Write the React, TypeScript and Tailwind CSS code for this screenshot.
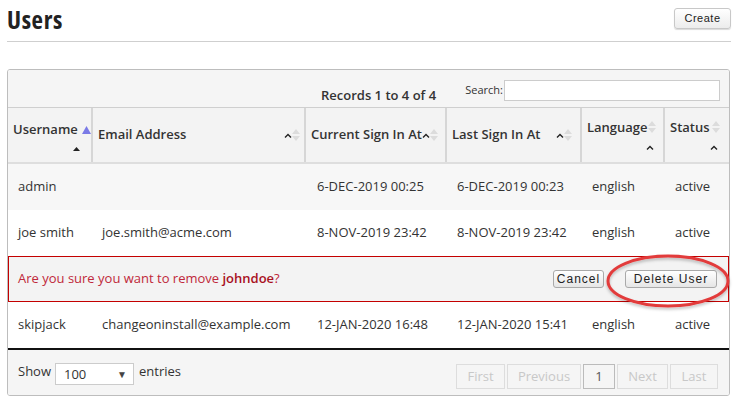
const SortBoth = () => (
  <svg width="8" height="14" viewBox="0 0 8 14" className="shrink-0">
    <polygon points="4,1 8,6 0,6" fill="#dcdcdc" />
    <polygon points="0,8 8,8 4,13" fill="#dcdcdc" />
  </svg>
);

const Caret = () => (
  <svg width="8" height="5" viewBox="0 0 8 5" className="shrink-0">
    <polyline points="1,4.5 4,1.5 7,4.5" fill="none" stroke="#222" strokeWidth="1.4" />
  </svg>
);

const cols = ["w-[85px]", "w-[213px]", "w-[141px]", "w-[135px]", "w-[83px]", "w-[64px]"];

const rows = [
  { user: "admin", email: "", cur: "6-DEC-2019 00:25", last: "6-DEC-2019 00:23", bg: "bg-[#f7f7f7]" },
  { user: "joe smith", email: "joe.smith@acme.com", cur: "8-NOV-2019 23:42", last: "8-NOV-2019 23:42", bg: "bg-white" },
];

const Row = ({ r }: { r: { user: string; email: string; cur: string; last: string; bg: string } }) => (
  <div className={`flex h-[46px] items-center text-[13px] text-[#333] whitespace-nowrap ${r.bg}`}>
    <div className={`${cols[0]} pl-[10px]`}>{r.user}</div>
    <div className={`${cols[1]} pl-[9px]`}>{r.email}</div>
    <div className={`${cols[2]} pl-[11px]`}>{r.cur}</div>
    <div className={`${cols[3]} pl-[10px]`}>{r.last}</div>
    <div className={`${cols[4]} pl-[10px]`}>english</div>
    <div className={`${cols[5]} pl-[10px]`}>active</div>
  </div>
);

const btn =
  "h-[18px] rounded-[3px] border border-[#a9a9a9] bg-gradient-to-b from-white to-[#e6e6e6] text-[12px] tracking-[1px] text-[#222] font-['Liberation_Sans',Arial,sans-serif] leading-none";

const pageBtn = "h-[25px] border border-[#ddd] bg-[#f5f5f5] text-[13px] text-[#c8c8c8] flex items-center justify-center";

export default function App() {
  return (
    <div className="w-[747px] h-[405px] bg-white px-[7px] font-['Open_Sans',sans-serif] text-[#333] relative overflow-hidden">
      <div className="flex items-center justify-between h-[42px] border-b border-[#cfcfcf] w-[724px]">
        <h1 className="text-[25px] font-bold font-stretch-[85%] tracking-[0.6px] text-[#222] leading-none mb-[2px]">Users</h1>
        <button className="h-[21px] w-[57px] mb-[4px] rounded-[3px] border border-[#c8c8c8] bg-gradient-to-b from-white to-[#ececec] text-[11px] tracking-[0.5px] text-[#222] font-['Liberation_Sans',Arial,sans-serif] shadow-[0_1px_1px_rgba(0,0,0,0.15)]">
          Create
        </button>
      </div>

      <div className="mt-[27px] w-[723px] rounded-[3px] border border-[#bdbdbd] overflow-hidden">
        <div className="flex items-center h-[38px] bg-[#f5f5f5] border-b border-[#cfcfcf]">
          <span className="ml-[313px] mt-[14px] text-[13px] font-semibold text-[#333]">Records 1 to 4 of 4</span>
          <label className="ml-auto flex items-center text-[11px] text-[#333] mr-[9px] mt-[4px]">
            Search:
            <input className="ml-[1px] w-[216px] h-[21px] bg-white border border-[#ccc] outline-none" />
          </label>
        </div>

        <div className="flex h-[56px] bg-[#f3f3f3] border-b-2 border-[#dedede] text-[13px] font-semibold text-[#333] whitespace-nowrap">
          <div className={`${cols[0]} border-r-2 border-[#d6d6d6] flex flex-col justify-center pl-[5px] pr-[10px]`}>
            <div className="flex items-center gap-[4px] mt-[1px]">
              <span>Username</span>
              <svg width="9" height="8" viewBox="0 0 9 8" className="shrink-0"><polygon points="4.5,0 9,8 0,8" fill="#7a7ae6" /></svg>
            </div>
            <div className="flex justify-end pr-[1px] mt-[7px]">
              <svg width="7" height="4" viewBox="0 0 7 4"><polygon points="3.5,0 7,4 0,4" fill="#222" /></svg>
            </div>
          </div>
          <div className={`${cols[1]} border-r-2 border-[#d6d6d6] flex items-center pl-[5px] pr-[4px]`}>
            <span>Email Address</span>
            <span className="ml-auto flex items-center"><Caret /><SortBoth /></span>
          </div>
          <div className={`${cols[2]} border-r-2 border-[#d6d6d6] flex items-center pl-[5px] pr-[7px]`}>
            <span>Current Sign In At</span>
            <span className="ml-auto flex items-center"><Caret /><SortBoth /></span>
          </div>
          <div className={`${cols[3]} border-r-2 border-[#d6d6d6] flex items-center pl-[5px] pr-[8px]`}>
            <span>Last Sign In At</span>
            <span className="ml-auto flex items-center"><Caret /><SortBoth /></span>
          </div>
          <div className={`${cols[4]} border-r-2 border-[#d6d6d6] flex flex-col justify-center pl-[5px] pr-[7px]`}>
            <div className="flex items-start justify-between">
              <span className="-mt-[2px]">Language</span>
              <SortBoth />
            </div>
            <div className="flex justify-end pr-[2px] mt-[7px]"><Caret /></div>
          </div>
          <div className={`${cols[5]} flex flex-col justify-center pl-[5px] pr-[9px]`}>
            <div className="flex items-start justify-between">
              <span className="-mt-[2px]">Status</span>
              <SortBoth />
            </div>
            <div className="flex justify-end pr-[2px] mt-[7px]"><Caret /></div>
          </div>
        </div>

        {rows.map((r) => (
          <Row key={r.user} r={r} />
        ))}

        <div className="flex items-center h-[46px] bg-[#f3f3f3] border border-[#c40000] text-[13px]">
          <span className="pl-[9px] text-[#c0283a]">
            Are you sure you want to remove <b className="font-semibold text-[#a8101e]">johndoe</b>?
          </span>
          <button className={`${btn} ml-auto w-[51px]`}>Cancel</button>
          <button className={`${btn} ml-[21px] mr-[11px] w-[92px]`}>Delete User</button>
        </div>

        <div className="border-b-2 border-[#111]">
          <Row r={{ user: "skipjack", email: "changeoninstall@example.com", cur: "12-JAN-2020 16:48", last: "12-JAN-2020 15:41", bg: "bg-white" }} />
        </div>

        <div className="flex items-center h-[45px] bg-[#f5f5f5] text-[13px] text-[#333]">
          <span className="pl-[10px] -mt-[2px]">Show</span>
          <div className="ml-[4px] w-[79px] h-[22px] bg-white border border-[#ccc] flex items-center pl-[8px] pr-[6px] mt-[3px]">
            <span className="mt-[2px]">100</span>
            <span className="ml-auto text-[10px] text-[#444]">▼</span>
          </div>
          <span className="ml-[5px] -mt-[2px]">entries</span>
          <div className="ml-auto mr-[11px] mt-[8px] flex gap-[2px]">
            <div className={`${pageBtn} w-[49px]`}>First</div>
            <div className={`${pageBtn} w-[74px]`}>Previous</div>
            <div className="h-[25px] w-[32px] border border-[#bbb] bg-[#f5f5f5] text-[13px] text-[#555] flex items-center justify-center">1</div>
            <div className={`${pageBtn} w-[51px]`}>Next</div>
            <div className={`${pageBtn} w-[48px]`}>Last</div>
          </div>
        </div>
      </div>

      <svg className="absolute left-[600px] top-[250px] pointer-events-none" width="140" height="66" viewBox="0 0 140 66">
        <defs>
          <filter id="sh" x="-20%" y="-20%" width="140%" height="140%">
            <feDropShadow dx="0" dy="2" stdDeviation="1.5" floodColor="#000" floodOpacity="0.25" />
          </filter>
        </defs>
        <ellipse cx="68" cy="31" rx="60" ry="25" fill="none" stroke="#e23b3b" strokeWidth="3" filter="url(#sh)" />
      </svg>
    </div>
  );
}
